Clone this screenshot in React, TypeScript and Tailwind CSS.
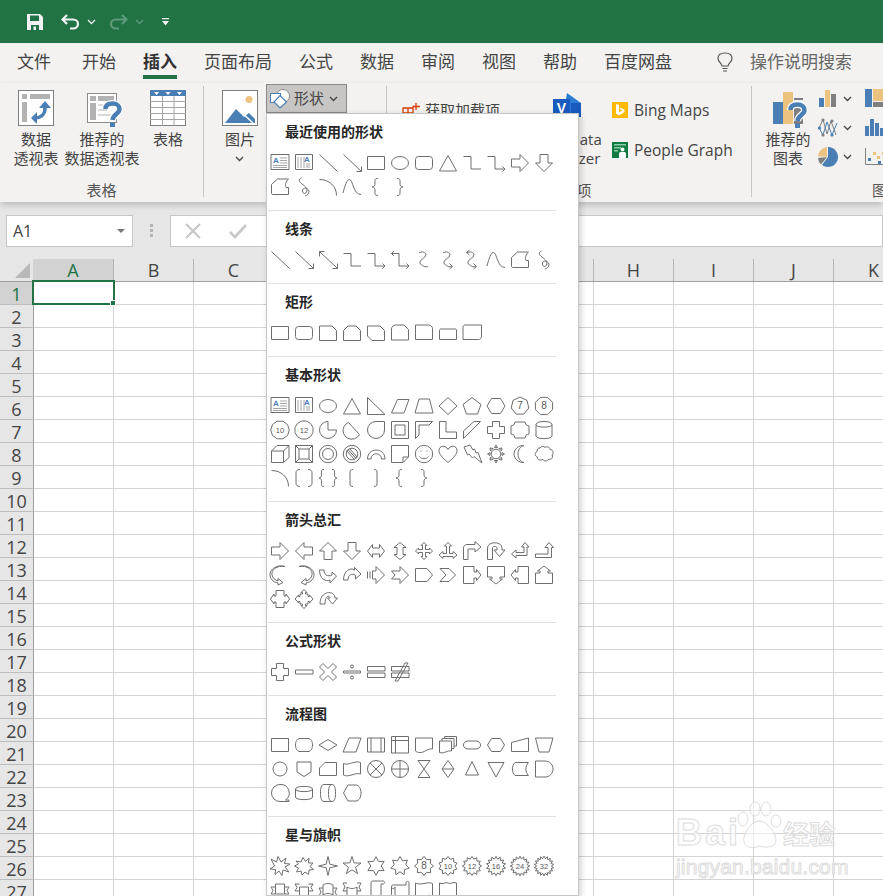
import type { ReactNode } from 'react';

const poly = (n: number, r: number, rot = -90, cx = 11, cy = 12) => {
  let d = '';
  for (let i = 0; i < n; i++) {
    const a = ((rot + (360 / n) * i) * Math.PI) / 180;
    d += `${i ? 'L' : 'M'}${(cx + r * Math.cos(a)).toFixed(1)} ${(cy + r * Math.sin(a)).toFixed(1)}`;
  }
  return d + 'z';
};

const star = (n: number, R: number, r: number, cx = 11, cy = 12) => {
  let d = '';
  for (let i = 0; i < n * 2; i++) {
    const a = ((-90 + (180 / n) * i) * Math.PI) / 180;
    const q = i % 2 ? r : R;
    d += `${i ? 'L' : 'M'}${(cx + q * Math.cos(a)).toFixed(1)} ${(cy + q * Math.sin(a)).toFixed(1)}`;
  }
  return d + 'z';
};

const circle = (r: number, cx = 11, cy = 12) =>
  `M${cx - r} ${cy}a${r} ${r} 0 1 0 ${r * 2} 0a${r} ${r} 0 1 0 ${-r * 2} 0z`;

const RECT = 'M2.5 5.5h17v13h-17z';
const ROUND = 'M5.5 5.5h11a3 3 0 0 1 3 3v7a3 3 0 0 1-3 3h-11a3 3 0 0 1-3-3v-7a3 3 0 0 1 3-3z';
const ELLIPSE = 'M2.5 12a8.5 6.5 0 1 0 17 0a8.5 6.5 0 1 0-17 0z';
const ELBOW = 'M2.5 5.5H10V18H20';
const ELBOW_ARROW = ELBOW + 'M17.5 15.5L20 18L17.5 20.5';
const CURVE_C = 'M6 4.5C11 3 14 5 12.5 8C11 11 6 12 7 15C8 18 13 19.5 15 18.5';
const WAVE = 'M2 18C4 10 6 4.5 8.5 4.5C12 4.5 12 19.5 20 19.5';
const FREEFORM = 'M8.5 4H19.5C16.5 6.5 16 10 17 12.5H19.5V19.5H4C3 19.5 2.5 19 2.5 18V9.5z';
const SCRIBBLE = 'M8.5 3C5 4 6 7 9 9C13 12 15 14 13.5 17C12 20 9 18 9.5 15C10 12 15 13 16 16C16 19 14 20.5 12 21';
const ARC = 'M2.5 4.5C12 4.5 19.5 11 19.5 20.5';
const BRACE_L = 'M13 3.5C9.5 3.5 10 5 10 8C10 10.5 9.5 12 7 12C9.5 12 10 13.5 10 16C10 19 9.5 20.5 13 20.5';
const BRACE_R = 'M8 3.5C11.5 3.5 11 5 11 8C11 10.5 11.5 12 14 12C11.5 12 11 13.5 11 16C11 19 11.5 20.5 8 20.5';
const LINE = 'M2.5 3.5L20.5 20.5';
const ARROW_LINE = LINE + 'M20.5 15.5V20.5H15.5';
const ARROW_DBL = ARROW_LINE + 'M2.5 8.5V3.5H7.5';

const PATHS: Record<string, string> = {
  textH: 'M2 3.5h18v15h-18z',
  textV: 'M2.5 3.5h17v15h-17z',
  line: LINE,
  arrow: ARROW_LINE,
  dbl: ARROW_DBL,
  rect: RECT,
  ellipse: ELLIPSE,
  round: ROUND,
  tri: 'M11 4.5L19.5 20H2.5z',
  elbow: ELBOW,
  elbowA: ELBOW_ARROW,
  elbowD: ELBOW_ARROW + 'M5 3L2.5 5.5L5 8',
  curveC: CURVE_C,
  curveA: CURVE_C + 'M12.5 21L15.5 18.5L12.5 15.5',
  curveD: CURVE_C + 'M12.5 21L15.5 18.5L12.5 15.5M8.5 2L5.5 4.5L8.5 7',
  wave: WAVE,
  free: FREEFORM,
  scrib: SCRIBBLE,
  arc: ARC,
  braceL: BRACE_L,
  braceR: BRACE_R,
  r1: 'M2.5 5H15L19.5 9.5V19.5H2.5z',
  r2: 'M7 5H15L19.5 9.5V19.5H2.5V9.5z',
  r3: 'M2.5 5H15L19.5 9.5V19.5H7L2.5 15z',
  r4: 'M6.5 4H15L19.5 8.5V19H2.5V8C2.5 6 4.5 4 6.5 4z',
  r5: 'M2.5 4H15.5C18 4 19.5 5.5 19.5 8V18.5H2.5z',
  r7: 'M4 8H18.5C19 8 19.5 8.5 19.5 9V18.5H2.5V9.5C2.5 8.5 3 8 4 8z',
  r8: 'M4 4H20.5V15C20.5 17 19.5 18.5 17.5 18.5H2V6C2 5 3 4 4 4z',
  rTri: 'M2.5 3.5L20 20.5H2.5z',
  para: 'M2.5 19L8.5 5.5H20L15 19z',
  trap: 'M6 5L2 19H20L16.5 5z',
  diamond: 'M11 3.5L20 12L11 20.5L2 12z',
  pent: 'M11 3.5L20 10.5L16.5 20H5.5L2 10.5z',
  hex: 'M6.5 4.5H15.5L20 12L15.5 19.5H6.5L2 12z',
  n7: poly(7, 9),
  n8: poly(8, 9.3, 22.5),
  n10: poly(10, 9.3, 0),
  n12: poly(12, 9.3, 15),
  pie: 'M11 3.5A8.5 8.5 0 1 0 19.5 12H11z',
  chord: 'M7.5 4.5L18.5 16.5A8.7 8.7 0 0 1 3 8.5A8 8 0 0 1 7.5 4.5z',
  drop: 'M19.5 3.5V12A8.5 8.5 0 1 1 11 3.5z',
  frame: 'M2.5 3.5h17v17h-17zM6 7h10v10H6z',
  half: 'M2.5 20.5V3.5H19.5L16 7H6V17z',
  ell: 'M2.5 3.5H9V14H19.5V20.5H2.5z',
  stripe: 'M2.5 13L13 3.5H19.5L2.5 20.5z',
  cross: 'M7.5 3.5H14.5V8.5H19.5V15.5H14.5V20.5H7.5V15.5H2.5V8.5H7.5z',
  plaque: 'M6 4H16Q16 7.5 20 8V16Q16 16.5 16 20H6Q6 16.5 2 16V8Q6 7.5 6 4z',
  can: 'M3 6.5C3 2.5 19 2.5 19 6.5V18C19 21.5 3 21.5 3 18zM3 6.5C3 10 19 10 19 6.5',
  cube: 'M2.5 9L8 3.5H20V15.5L14.5 20.5H2.5zM2.5 9H14.5V20.5M14.5 9L20 3.5',
  bevel: 'M2.5 3.5h17v17h-17zM6 7h10v10H6zM2.5 3.5L6 7M19.5 3.5L16 7M2.5 20.5L6 17M19.5 20.5L16 17',
  donut: circle(8.7) + circle(5.5),
  noSym: circle(8.7) + circle(5.8) + 'M7 7.5L15 16.5M5.5 8.5L13.5 17.5M8.5 6.5L16.5 15.5',
  bArc: 'M2.5 17C2.5 5 20 5 20 17H16.5C16.5 10 6 10 6 17z',
  fold: 'M2.5 3.5H19.5V15L14 20.5H2.5zM19.5 15H14V20.5',
  smile: circle(8.7) + 'M7.5 9h1M13.5 9h1M6.5 14.5C8.5 17.5 13.5 17.5 15.5 14.5',
  heart: 'M11 20.5C5 15.5 2 12 2 8.5C2 3.5 8.5 2.5 11 7.5C13.5 2.5 20 3.5 20 8.5C20 12 17 15.5 11 20.5z',
  bolt: 'M3 5L9 3L12 8L13.5 7L15 11L17 10.5L21 21L13 14.5L11.5 16L8 12L6.5 13z',
  sun:
    circle(4.8) +
    'M11 3L9.5 5.5H12.5zM11 21L9.5 18.5H12.5zM2.5 12L5 10.5V13.5zM19.5 12L17 10.5V13.5zM5 6L8 6.5L5.5 9zM17 6L14 6.5L16.5 9zM5 18L8 17.5L5.5 15zM17 18L14 17.5L16.5 15z',
  moon: 'M15 3.5C7 5.5 7 18.5 15 20.5C10 21 5 17 5 12C5 7 10 3 15 3.5z',
  cloud: 'M7 6C8 4 11 4 12 5.5C14 4 17 5 17 7.5C20 7.5 21 11 19 13C20.5 16 18 18 16 17C14.5 19.5 11 19.5 10 17.5C7 19 4 17.5 4.5 15C1.5 14.5 1.5 10.5 4 9.5C3.5 7.5 5.5 5.5 7 6z',
  bPair: 'M7 3.5C4 3.5 3 5 3 7V17C3 19 4 20.5 7 20.5M15 3.5C18 3.5 19 5 19 7V17C19 19 18 20.5 15 20.5',
  brPair: 'M7 3.5C4 3.5 4.5 5 4.5 8C4.5 10.5 4 12 2 12C4 12 4.5 13.5 4.5 16C4.5 19 4 20.5 7 20.5M15 3.5C18 3.5 17.5 5 17.5 8C17.5 10.5 18 12 20 12C18 12 17.5 13.5 17.5 16C17.5 19 18 20.5 15 20.5',
  bL: 'M12 3.5C9.5 3.5 9 4.5 9 6V18C9 19.5 9.5 20.5 12 20.5',
  bR: 'M9 3.5C11.5 3.5 12 4.5 12 6V18C12 19.5 11.5 20.5 9 20.5',
  aR: 'M2.5 8H11V3.5L19.5 12L11 20.5V16H2.5z',
  aL: 'M19.5 8H11V3.5L2.5 12L11 20.5V16H19.5z',
  aU: 'M7 20.5V12H2.5L11 3.5L19.5 12H15V20.5z',
  aD: 'M7 3.5V12H2.5L11 20.5L19.5 12H15V3.5z',
  aLR: 'M2.5 12L7.5 5.5V9H14.5V5.5L19.5 12L14.5 18.5V15H7.5V18.5z',
  aUD: 'M11 3.5L17 8.5H14V15.5H17L11 20.5L5 15.5H8V8.5H5z',
  aQ: 'M11 3.5L14 6.5H12.5V10.5H16.5V9L19.5 12L16.5 15V13.5H12.5V17.5H14L11 20.5L8 17.5H9.5V13.5H5.5V15L2.5 12L5.5 9V10.5H9.5V6.5H8z',
  aLRU: 'M11 3.5L14.5 7H12.5V14.5H16V12.5L20 16L16 19.5V17.5H6V19.5L2 16L6 12.5V14.5H9.5V7H7.5z',
  aBent: 'M2.5 20.5V9C2.5 7 4 5.5 6 5.5H14V2.5L20 8L14 13V10H7V20.5z',
  aU2: 'M2.5 20.5V9C2.5 2 17 2 17 9V11H20L14.5 17.5L9 11H12V9C12 7 7.5 7 7.5 9V20.5z',
  aLU: 'M16 3.5L20 8H18V16.5H7V19L2.5 15L7 11V13.5H15V8H12.5z',
  aBU: 'M16 3.5L20.5 8.5H18.5V18.5H2.5V15H15V8.5H12z',
  cR: 'M16 3.5C8 2 2 7 3 12C3.5 15 6 17 9 18V15.5L14 19.5L9 22V20C4 19 0.5 15.5 1 11C1.5 6 8 1 16 3.5z',
  cL: 'M6 3.5C14 2 20 7 19 12C18.5 15 16 17 13 18V15.5L8 19.5L13 22V20C18 19 21.5 15.5 21 11C20.5 6 14 1 6 3.5z',
  cD: 'M2.5 7C2.5 16 9 19 13 17V20L19.5 13L15 9V12C11 14 7 12 7 7z',
  cU: 'M2.5 17C2.5 8 9 4 13.5 7V4.5L20 11L14.5 16V12.5C11 9.5 7 12 7 17z',
  aStr: 'M2.5 8.5V15.5M5 8.5V15.5M7.5 8H11V3.5L19.5 12L11 20.5V16H7.5z',
  aNot: 'M2.5 8H11V3.5L19.5 12L11 20.5V16H2.5L6 12z',
  home: 'M2.5 5.5H14L19.5 12L14 18.5H2.5z',
  chev: 'M3 5.5H12L18.5 12L12 18.5H3L9 12z',
  cbR: 'M2.5 3.5H13V9H15.5V6.5L20 12L15.5 17.5V15H13V20.5H2.5z',
  cbD: 'M2.5 3.5H19.5V14H15V16H17.5L11 21L4.5 16H7V14H2.5z',
  cbL: 'M19.5 3.5H9V9H6.5V6.5L2 12L6.5 17.5V15H9V20.5H19.5z',
  cbU: 'M2.5 20.5V10H7V8H4.5L11 3L17.5 8H15V10H19.5V20.5z',
  cbLR: 'M7 3.5H15V9H17V7L20.5 12L17 17V15H15V20.5H7V15H5V17L1.5 12L5 7V9H7z',
  cbQ: 'M11 2.5L14 5.5H12.5V7H15V9.5H16.5V8L20 12L16.5 16V14.5H15V17H12.5V18.5H14L11 21.5L8 18.5H9.5V17H7V14.5H5.5V16L2 12L5.5 8V9.5H7V7H9.5V5.5H8z',
  aCirc: 'M3 17C3 3 18 3 18 11H20.5L15.5 17L10.5 11H13C13 8 8 8 8 17z',
  plus: 'M7.5 3.5H14.5V8.5H19.5V15.5H14.5V20.5H7.5V15.5H2.5V8.5H7.5z',
  minus: 'M2.5 10H20V14H2.5z',
  times: 'M6 3.5L11 8.5L16 3.5L19.5 7L14.5 12L19.5 17L16 20.5L11 15.5L6 20.5L2.5 17L7.5 12L2.5 7z',
  div: 'M2.5 11H19.5V13H2.5z' + circle(1.5, 11, 6.5) + circle(1.5, 11, 17.5),
  eq: 'M2.5 6.5H20V11H2.5zM2.5 13H20V17.5H2.5z',
  neq: 'M2.5 6.5H20V11H2.5zM2.5 13H20V17.5H2.5zM6 21L16 3H19L9 21z',
  fRound: 'M7 5.5H15C18 5.5 19.5 8.5 19.5 12C19.5 15.5 18 18.5 15 18.5H7C4 18.5 2.5 15.5 2.5 12C2.5 8.5 4 5.5 7 5.5z',
  fDia: 'M11 6.5L20 12L11 17.5L2 12z',
  fPara: 'M2 19L8 5H20L15 19z',
  fPre: 'M2.5 5H19.5V19H2.5zM6 5V19M16 5V19',
  fInt: 'M2.5 3.5H19.5V20H2.5zM2.5 7.5H19.5M6.5 3.5V20',
  fDoc: 'M2.5 5H19.5V16C15 15 11 20 7 19.5C5 19.5 3.5 19 2.5 18z',
  fMulti: 'M2.5 8H14.5V18C10 17 8 21 2.5 19.5zM5 8V5.5H17V15.5H14.5M7.5 5.5V3.5H19.5V13H17',
  fTerm: 'M7 8H15C18 8 19.5 10 19.5 12C19.5 14 18 16 15 16H7C4 16 2.5 14 2.5 12C2.5 10 4 8 7 8z',
  fPrep: 'M6.5 5.5H15.5L19.5 12L15.5 18.5H6.5L2.5 12z',
  fMan: 'M2.5 9.5L19.5 5V18.5H2.5z',
  fOp: 'M2.5 5H20L16 19H6z',
  fConn: circle(7),
  fOff: 'M4 5H18V15L11 19.5L4 15z',
  fCard: 'M8 5.5H19.5V18.5H2.5V11z',
  fTape: 'M2.5 6.5C7 9 14 3 19.5 5.5V17C14 15 8 21 2.5 18z',
  fSum: circle(8.5) + 'M5 6L17 18M17 6L5 18',
  fOr: circle(8.5) + 'M2.5 12H19.5M11 3.5V20.5',
  fCol: 'M5 3.5H17L5 20.5H17z',
  fSort: 'M11 3.5L17 12L11 20.5L5 12zM5 12H17',
  fExt: 'M11 4.5L17.5 18H4.5z',
  fMer: 'M3 5.5H19L11 20z',
  fStored: 'M6 5.5H19.5C16 9 16 15 19.5 18.5H6C2.5 15 2.5 9 6 5.5z',
  fDelay: 'M2.5 4H12C17 4 20 8 20 12C20 16 17 20 12 20H2.5z',
  fSeq: 'M11 3.5A8.5 8.5 0 1 0 11 20.5H20V19H16.5A8.5 8.5 0 0 0 11 3.5z',
  fDisk: 'M2.5 8C2.5 4.5 19.5 4.5 19.5 8V16C19.5 19.5 2.5 19.5 2.5 16zM2.5 8C2.5 11.5 19.5 11.5 19.5 8',
  fDir: 'M7 3.5H15C18 3.5 18.5 8 18.5 12C18.5 16 18 20.5 15 20.5H7C4 20.5 3.5 16 3.5 12C3.5 8 4 3.5 7 3.5zM15 3.5C12 3.5 11.5 8 11.5 12C11.5 16 12 20.5 15 20.5',
  fDisp: 'M7 4H15C18 4 20 8 20 12C20 16 18 20 15 20H7L2.5 12z',
  ex1: 'M2 5L7.5 8L9 2.5L12 8L17 4L15.5 9.5L21 10L16 13L20 18L14 16L13 21.5L10 17L6 20.5L6.5 15.5L1 15L5.5 12z',
  ex2: 'M3 7L8 8L10 3.5L12.5 7.5L16 4L15.5 9L20 9L17 12.5L20.5 15.5L16 16L15.5 20.5L12 18L9 21L8 17L3.5 18L5.5 14L1.5 12L5.5 10z',
  s4: star(4, 9.5, 2.5),
  s5: star(5, 9.5, 3.8),
  s6: star(6, 9.3, 5.2),
  s7: star(7, 9.5, 5.8),
  s8: star(8, 9.5, 6.8),
  s10: star(10, 9.5, 7),
  s12: star(12, 9.6, 7),
  s16: star(14, 9.7, 7),
  s24: star(16, 9.8, 7.2),
  s32: star(18, 9.9, 7.4),
  rib1: 'M6.5 6H15.5V16H6.5zM6.5 9H2L4 12.5L2 16H6.5M15.5 9H20L18 12.5L20 16H15.5',
  rib2: 'M6.5 9H15.5V19H6.5zM6.5 6H2L4 9.5L2 13H6.5M15.5 6H20L18 9.5L20 13H15.5',
  rib3: 'M6 7C9 5 13 5 16 7V17C13 15 9 15 6 17zM6 10H2L4 14L2 18H6M16 10H20L18 14L20 18H16',
  rib4: 'M6 9C9 11 13 11 16 9V19C13 21 9 21 6 19zM6 5H2L4 9L2 13H6M16 5H20L18 9L20 13H16',
  sV: 'M6 5C6 3.5 7 3 8 3H18C20 3 20 6 18 6H16V20C16 21.5 14 21.5 12 21.5H4C2.5 21.5 2.5 18.5 4 18.5H6z',
  sH: 'M4.5 7H17V4.5C17 3 20 3 20 4.5V17C20 18.5 18 19 17 19H5C2.5 19 2.5 17 2.5 15V9C2.5 7.5 3 7 4.5 7zM2.5 9C2.5 11 6 11 6 9V19',
  wav: 'M2.5 5C8 8 14 3 19.5 5.5V18C14 15.5 8 21 2.5 18z',
  wav2: 'M2.5 5C6 7 9 3.5 11 5C13 6.5 16 3.5 19.5 5V18C16 16.5 13 19.5 11 18C9 16.5 6 20 2.5 18z',
};

const NUMS: Record<string, string> = {
  n7: '7',
  n8: '8',
  n10: '10',
  n12: '12',
  s8: '8',
  s10: '10',
  s12: '12',
  s16: '16',
  s24: '24',
  s32: '32',
};

function Shape({ name }: { name: string }) {
  return (
    <svg width="24" height="24" viewBox="0 0 24 24" fill="none" className="block shrink-0">
      <path d={PATHS[name]} stroke="#6e6e6e" strokeWidth="1" />
      {name === 'textH' && (
        <>
          <path d="M11 7h7M11 9.5h7M11 12h7M4 14.5h14M4 16.5h14" stroke="#a6a6a6" />
          <text x="4" y="12" fontSize="8" fontWeight="700" fill="#4a7ebb" fontFamily="'Liberation Sans'">A</text>
        </>
      )}
      {name === 'textV' && (
        <>
          <path d="M5 6v11M8 6v11M11 6v11M14 12v5M16 12v5" stroke="#a6a6a6" />
          <text x="11" y="11" fontSize="8" fontWeight="700" fill="#4a7ebb" fontFamily="'Liberation Sans'">A</text>
        </>
      )}
      {NUMS[name] && (
        <text x="11" y="15" textAnchor="middle" fontSize={NUMS[name].length > 1 ? 7.5 : 10} fill="#555" fontFamily="'Liberation Sans'">
          {NUMS[name]}
        </text>
      )}
    </svg>
  );
}

const SECTIONS: { title: string; rows: string[][] }[] = [
  {
    title: '最近使用的形状',
    rows: [
      ['textH', 'textV', 'line', 'arrow', 'rect', 'ellipse', 'round', 'tri', 'elbow', 'elbowA', 'aR', 'aD'],
      ['free', 'scrib', 'arc', 'wave', 'braceL', 'braceR'],
    ],
  },
  {
    title: '线条',
    rows: [['line', 'arrow', 'dbl', 'elbow', 'elbowA', 'elbowD', 'curveC', 'curveA', 'curveD', 'wave', 'free', 'scrib']],
  },
  { title: '矩形', rows: [['rect', 'round', 'r1', 'r2', 'r3', 'r4', 'r5', 'r7', 'r8']] },
  {
    title: '基本形状',
    rows: [
      ['textH', 'textV', 'ellipse', 'tri', 'rTri', 'para', 'trap', 'diamond', 'pent', 'hex', 'n7', 'n8'],
      ['n10', 'n12', 'pie', 'chord', 'drop', 'frame', 'half', 'ell', 'stripe', 'cross', 'plaque', 'can'],
      ['cube', 'bevel', 'donut', 'noSym', 'bArc', 'fold', 'smile', 'heart', 'bolt', 'sun', 'moon', 'cloud'],
      ['arc', 'bPair', 'brPair', 'bL', 'bR', 'braceL', 'braceR'],
    ],
  },
  {
    title: '箭头总汇',
    rows: [
      ['aR', 'aL', 'aU', 'aD', 'aLR', 'aUD', 'aQ', 'aLRU', 'aBent', 'aU2', 'aLU', 'aBU'],
      ['cR', 'cL', 'cD', 'cU', 'aStr', 'aNot', 'home', 'chev', 'cbR', 'cbD', 'cbL', 'cbU'],
      ['cbLR', 'cbQ', 'aCirc'],
    ],
  },
  { title: '公式形状', rows: [['plus', 'minus', 'times', 'div', 'eq', 'neq']] },
  {
    title: '流程图',
    rows: [
      ['rect', 'fRound', 'fDia', 'fPara', 'fPre', 'fInt', 'fDoc', 'fMulti', 'fTerm', 'fPrep', 'fMan', 'fOp'],
      ['fConn', 'fOff', 'fCard', 'fTape', 'fSum', 'fOr', 'fCol', 'fSort', 'fExt', 'fMer', 'fStored', 'fDelay'],
      ['fSeq', 'fDisk', 'fDir', 'fDisp'],
    ],
  },
  {
    title: '星与旗帜',
    rows: [
      ['ex1', 'ex2', 's4', 's5', 's6', 's7', 's8', 's10', 's12', 's16', 's24', 's32'],
      ['rib1', 'rib2', 'rib3', 'rib4', 'sV', 'sH', 'wav', 'wav2'],
    ],
  },
];

function ShapesMenu() {
  return (
    <div className="absolute left-[266px] top-[113px] bottom-0 w-[313px] overflow-hidden border border-[#c6c6c6] bg-white shadow-[2px_2px_6px_rgba(0,0,0,0.18)] z-20">
      {SECTIONS.map((section, index) => (
        <div key={section.title} className={index ? 'border-t border-[#e1e1e1] ml-px mr-[22px]' : 'ml-px mr-[22px]'}>
          <div className="flex h-[37px] items-center pb-[2px] pl-[17px] text-[14px] font-bold text-[#262626]">
            {section.title}
          </div>
          <div className="pl-px pb-[11px]">
            {section.rows.map((row, rowIndex) => (
              <div key={rowIndex} className="flex h-[24px]">
                {row.map((name, i) => (
                  <Shape key={i} name={name} />
                ))}
              </div>
            ))}
          </div>
        </div>
      ))}
    </div>
  );
}

function Chevron({ className = 'text-[#444]' }: { className?: string }) {
  return (
    <svg width="9" height="6" viewBox="0 0 9 6" fill="none" className={className}>
      <path d="M1 1l3.5 3.5L8 1" stroke="currentColor" strokeWidth="1.3" />
    </svg>
  );
}

function TitleBar() {
  return (
    <div className="flex h-[43px] items-center bg-[#217346] pl-[27px]">
      <svg width="16" height="16" viewBox="0 0 16 16" className="block">
        <path d="M0 0H13L16 3V16H0z" fill="#f2f2f2" />
        <path d="M3 1.5H12V7H3z" fill="#217346" />
        <path d="M4 11H12V16H4z" fill="#217346" />
        <path d="M6.5 12.5H9V16H6.5z" fill="#f2f2f2" />
      </svg>
      <svg width="19" height="16" viewBox="0 0 19 16" fill="none" className="ml-[18px]">
        <path d="M6 1L1.5 5.5L6 10M2 5.5H12C15 5.5 17 7.5 17 10C17 12.5 15 14.5 12 14.5H9" stroke="#f2f2f2" strokeWidth="2.2" />
      </svg>
      <Chevron className="ml-[7px] text-[#f2f2f2]" />
      <svg width="19" height="16" viewBox="0 0 19 16" fill="none" className="ml-[13px]">
        <path d="M13 1L17.5 5.5L13 10M17 5.5H7C4 5.5 2 7.5 2 10C2 12.5 4 14.5 7 14.5H10" stroke="#5c9a7b" strokeWidth="2.2" />
      </svg>
      <Chevron className="ml-[7px] text-[#5c9a7b]" />
      <svg width="7" height="8" viewBox="0 0 7 8" className="ml-[18px]">
        <path d="M0 0H7V1.2H0zM0 3H7L3.5 7.5z" fill="#f2f2f2" />
      </svg>
    </div>
  );
}

const TABS = ['文件', '开始', '插入', '页面布局', '公式', '数据', '审阅', '视图', '帮助', '百度网盘'];

function TabBar() {
  return (
    <div className="flex h-[40px] items-start bg-[#f3f2f1] pl-[17px] text-[#444]">
      {TABS.map((tab, i) => (
        <div
          key={tab}
          className={`relative mr-[27px] h-[36px] text-[17px] leading-[36px] ${i === 0 ? 'pr-[4px]' : ''} ${tab === '插入' ? 'font-bold text-[#333] border-b-[4px] border-[#217346]' : ''}`}
        >
          {tab}
        </div>
      ))}
      <svg width="16" height="21" viewBox="0 0 16 21" fill="none" className="mt-[9px] ml-[18px]">
        <path d="M5 14C5 11 1 10 1 6.5C1 3 4 1 8 1C12 1 15 3 15 6.5C15 10 11 11 11 14zM5.5 16.5H10.5M6 19H10" stroke="#555" strokeWidth="1.2" />
      </svg>
      <div className="ml-[17px] text-[17px] leading-[36px] text-[#666]">操作说明搜索</div>
    </div>
  );
}

function PivotIcon() {
  return (
    <svg width="36" height="36" viewBox="0 0 36 36">
      <rect x="0.5" y="0.5" width="35" height="35" fill="#fff" stroke="#7f7f7f" />
      <path d="M4 4H9V9H4zM12 4H32V9H12zM4 12H9V32H4z" fill="#b2b2b2" />
      <path d="M17 28C22 28 27 25 27 18" fill="none" stroke="#4a7fb5" strokeWidth="3.5" />
      <path d="M21 18H33L27 11zM19 22V34L13 28z" fill="#4a7fb5" />
    </svg>
  );
}

function HelpMark({ x, y }: { x: number; y: number }) {
  return (
    <g transform={`translate(${x} ${y})`}>
      <path d="M2.5 8C2.5 4 5.5 2.5 9.5 2.5C14 2.5 16.5 5 16.5 8C16.5 13 10 13 9.5 19" fill="none" stroke="#fff" strokeWidth="7" />
      <path d="M2.5 8C2.5 4 5.5 2.5 9.5 2.5C14 2.5 16.5 5 16.5 8C16.5 13 10 13 9.5 19" fill="none" stroke="#4a7fb5" strokeWidth="4.5" />
      <rect x="7" y="21.5" width="5" height="4.5" fill="#4a7fb5" />
    </g>
  );
}

function RecPivotIcon() {
  return (
    <svg width="36" height="36" viewBox="0 0 36 36" className="overflow-visible">
      <rect x="3.5" y="3.5" width="29" height="29" fill="#fff" stroke="#8c8c8c" />
      <path d="M6 6H12V11H6zM14 6H30V11H14zM6 13H12V30H6z" fill="#b2b2b2" />
      <path d="M14 14H23V16H14zM14 19H23V21H14zM14 24H30V26H14z" fill="#d9d9d9" />
      <HelpMark x={19} y={11} />
    </svg>
  );
}

function TableIcon() {
  return (
    <svg width="36" height="36" viewBox="0 0 36 36">
      <rect x="0.5" y="0.5" width="35" height="35" fill="#fff" stroke="#7f7f7f" />
      <rect width="36" height="6" fill="#4a7fb5" />
      <path d="M4 2H9L6.5 5zM15.5 2H20.5L18 5zM27 2H32L29.5 5z" fill="#fff" />
      <path d="M12.5 6V36M24 6V36M0 11.5H36M0 17.5H36M0 23.5H36M0 29.5H36" stroke="#a6a6a6" />
    </svg>
  );
}

function PictureIcon() {
  return (
    <svg width="36" height="36" viewBox="0 0 36 36">
      <rect x="0.5" y="0.5" width="35" height="35" fill="#fff" stroke="#7f7f7f" />
      <circle cx="27" cy="9.5" r="3.5" fill="#eec27f" />
      <path d="M3 33L14 19L22 27L27 23L33 29V33z" fill="#4a7fb5" />
      <path d="M17 20L31 33" stroke="#fff" strokeWidth="1.5" />
    </svg>
  );
}

function ShapesIcon() {
  return (
    <svg width="21" height="20" viewBox="0 0 21 20" fill="none">
      <circle cx="13" cy="7" r="6.5" fill="#fff" stroke="#8c8c8c" />
      <rect x="0.5" y="4.5" width="10" height="9" fill="#fff" stroke="#4a7fb5" />
      <path d="M10 6.5L16.5 13L10 19L4 13z" fill="#fff" stroke="#4a7fb5" strokeWidth="1.2" />
    </svg>
  );
}

function VisioIcon() {
  return (
    <svg width="28" height="30" viewBox="0 0 28 30">
      <path d="M14 0L28 10V24H10z" fill="#2b7cd3" />
      <path d="M18 10L28 10V24H18z" fill="#185abd" />
      <rect y="6" width="17" height="17" fill="#185abd" />
      <text x="8.5" y="20" textAnchor="middle" fontSize="14" fontWeight="700" fill="#fff" fontFamily="'Liberation Sans'">V</text>
    </svg>
  );
}

function BingIcon() {
  return (
    <svg width="16" height="16" viewBox="0 0 16 16" className="shrink-0">
      <rect width="16" height="16" fill="#ffb900" />
      <path d="M4 2L7 3V10.5L10.5 8.5L8.5 7.5L7.5 5.5L12.5 7.5V10L7 13.5L4 11.5z" fill="#fff" />
    </svg>
  );
}

function PeopleIcon() {
  return (
    <svg width="16" height="16" viewBox="0 0 16 16" className="shrink-0">
      <rect width="16" height="16" fill="#107c41" />
      <path d="M2 2H14V3.5H2zM2 5H9V6.5H2zM2 8H6V9.5H2z" fill="#8fcbaa" />
      <circle cx="10.5" cy="7.5" r="2" fill="#fff" />
      <path d="M7 16V12C7 10.5 8 10 9 10H12C13 10 14 10.5 14 12V16z" fill="#fff" />
    </svg>
  );
}

function RecChartIcon() {
  return (
    <svg width="36" height="36" viewBox="0 0 36 36" className="overflow-visible">
      <rect x="3" y="12" width="10" height="22" fill="#4a7fb5" />
      <rect x="13" y="2" width="10" height="32" fill="#ecc27f" />
      <rect x="24" y="8" width="9" height="2" fill="#7f7f7f" />
      <rect x="24" y="16" width="9" height="18" fill="#7f7f7f" />
      <HelpMark x={18} y={12} />
    </svg>
  );
}

function BarsIcon() {
  return (
    <svg width="20" height="20" viewBox="0 0 20 20">
      <rect x="1" y="9" width="5" height="9" fill="#4a7fb5" />
      <rect x="7" y="1" width="5" height="17" fill="#ecc27f" />
      <rect x="13" y="5" width="5" height="13" fill="#7f7f7f" />
    </svg>
  );
}

function LinesIcon() {
  return (
    <svg width="20" height="20" viewBox="0 0 20 20" fill="none">
      <path d="M1 10L5 1.5L9 16L13 3L18 17" stroke="#7f7f7f" />
      <path d="M1 10L5 17L9 4L14 17L19 5" stroke="#4a7fb5" />
      <circle cx="5" cy="2" r="1.6" fill="#7f7f7f" />
      <circle cx="14" cy="3" r="1.6" fill="#7f7f7f" />
      <circle cx="1.5" cy="10" r="1.6" fill="#4a7fb5" />
      <circle cx="5" cy="17" r="1.6" fill="#7f7f7f" />
      <circle cx="14" cy="17" r="1.6" fill="#4a7fb5" />
    </svg>
  );
}

function PieIcon() {
  return (
    <svg width="20" height="20" viewBox="0 0 20 20">
      <path d="M10 0A10 10 0 1 1 4 18L10 10z" fill="#4a7fb5" />
      <path d="M9 10L3 17.5A10 10 0 0 1 0 11z" fill="#7f7f7f" />
      <path d="M9 0V9.5H0A10 10 0 0 1 9 0z" fill="#ecc27f" />
    </svg>
  );
}

function TreemapIcon() {
  return (
    <svg width="20" height="20" viewBox="0 0 20 20">
      <rect x="0" y="0" width="7" height="18" fill="#4a7fb5" />
      <rect x="8" y="0" width="12" height="12" fill="#ecc27f" />
      <rect x="8" y="13" width="12" height="5" fill="#7f7f7f" />
    </svg>
  );
}

function HistIcon() {
  return (
    <svg width="20" height="20" viewBox="0 0 20 20" fill="#4a7fb5">
      <rect x="0" y="8" width="4" height="10" />
      <rect x="5" y="1" width="4" height="17" />
      <rect x="10" y="5" width="4" height="13" />
      <rect x="15" y="10" width="5" height="8" />
    </svg>
  );
}

function ScatterIcon() {
  return (
    <svg width="20" height="20" viewBox="0 0 20 20" fill="none">
      <path d="M0.5 1V17.5H20" stroke="#7f7f7f" />
      <path d="M3 11h3v3H3zM13 14h3v3h-3z" fill="#4a7fb5" />
      <path d="M8 5h3v3H8zM12 9h3v3h-3zM17 5h3v3h-3z" fill="#ecc27f" />
    </svg>
  );
}

function BigButton({ icon, lines, width, after }: { icon: ReactNode; lines: string[]; width: string; after?: ReactNode }) {
  return (
    <div className={`flex flex-col items-center shrink-0 ${width}`}>
      <div className="flex h-[36px] w-full items-center justify-center mt-[7px]">{icon}</div>
      <div className="mt-[4px] flex flex-col items-center">
        {lines.map((line) => (
          <div key={line} className="whitespace-nowrap text-[15px] leading-[19px] text-[#444]">
            {line}
          </div>
        ))}
        {after}
      </div>
    </div>
  );
}

function Group({ width, inner, label, children }: { width: string; inner: string; label: string; children: ReactNode }) {
  return (
    <div className={`flex h-full shrink-0 flex-col ${width}`}>
      <div className={`flex flex-1 ${inner}`}>{children}</div>
      <div className="pb-[2px] text-center text-[15px] leading-[19px] text-[#555]">{label}</div>
    </div>
  );
}

function GroupDivider() {
  return <div className="mt-[3px] h-[111px] w-px shrink-0 bg-[#c8c6c4]" />;
}

function Ribbon() {
  return (
    <div className="relative z-10 flex h-[119px] bg-[#f3f2f1] shadow-[0_3px_6px_rgba(0,0,0,0.18)] font-['Open_Sans','Noto_Sans_CJK_SC',sans-serif]">
      <Group width="w-[203px]" inner="pl-[3px]" label="表格">
        <BigButton width="w-[66px]" icon={<PivotIcon />} lines={['数据', '透视表']} />
        <BigButton width="w-[66px]" icon={<RecPivotIcon />} lines={['推荐的', '数据透视表']} />
        <BigButton width="w-[66px]" icon={<TableIcon />} lines={['表格']} />
      </Group>
      <GroupDivider />
      <Group width="w-[182px]" inner="pl-[10px]" label="插图">
        <BigButton
          width="w-[52px]"
          icon={<PictureIcon />}
          lines={['图片']}
          after={
            <div className="flex h-[19px] items-center">
              <Chevron />
            </div>
          }
        />
        <div className="shrink-0 pt-px">
          <div className="flex h-[29px] w-[81px] items-center border border-[#8a8886] bg-[#c8c6c4] pl-[3px] text-[15px] text-[#444]">
            <ShapesIcon />
            <span className="ml-[3px]">形状</span>
            <Chevron className="ml-[5px] text-[#444]" />
          </div>
        </div>
      </Group>
      <GroupDivider />
      <Group width="w-[364px]" inner="pl-[15px]" label="加载项">
        <div className="flex h-[24px] w-[132px] shrink-0 items-center gap-[4px] mt-[15px]">
          <svg width="19" height="17" viewBox="0 0 19 17" fill="none" className="shrink-0">
            <path d="M1 6H11V16H1zM6 6V16M1 11H11M14 1V8M10.5 4.5H18" stroke="#d83b01" strokeWidth="1.3" />
          </svg>
          <span className="whitespace-nowrap text-[15px] text-[#444]">获取加载项</span>
        </div>
        <BigButton width="w-[66px]" icon={<VisioIcon />} lines={['Visio Data', 'Visualizer']} />
        <div className="ml-[12px] flex flex-col gap-[16px] pt-[15px] text-[15.5px] leading-[24px] text-[#444]">
          <div className="flex items-center gap-[6px] whitespace-nowrap">
            <BingIcon />
            Bing Maps
          </div>
          <div className="flex items-center gap-[6px] whitespace-nowrap">
            <PeopleIcon />
            People Graph
          </div>
        </div>
      </Group>
      <GroupDivider />
      <Group width="w-[270px]" inner="pl-[4px]" label="图表">
        <BigButton width="w-[64px]" icon={<RecChartIcon />} lines={['推荐的', '图表']} />
        <div className="-ml-[2px] flex flex-col pt-[1px]">
          {[<BarsIcon key="b" />, <LinesIcon key="l" />, <PieIcon key="p" />].map((icon, i) => (
            <div key={i} className="flex h-[29px] items-center">
              {icon}
              <Chevron className="ml-[5px] text-[#444]" />
            </div>
          ))}
        </div>
        <div className="ml-[13px] flex flex-col pt-[1px]">
          {[<TreemapIcon key="t" />, <HistIcon key="h" />, <ScatterIcon key="s" />].map((icon, i) => (
            <div key={i} className="flex h-[29px] items-center">
              {icon}
            </div>
          ))}
        </div>
      </Group>
    </div>
  );
}

function FormulaBar() {
  return (
    <div className="flex h-[57px] items-start bg-[#e6e6e6] pt-[13px] pl-[6px] font-['Open_Sans',sans-serif]">
      <div className="flex h-[32px] w-[127px] shrink-0 items-center justify-between border border-[#c6c6c6] bg-white pl-[6px] pr-[7px] text-[16px] text-[#444]">
        A1
        <svg width="8" height="4" viewBox="0 0 8 4">
          <path d="M0 0H8L4 4z" fill="#777" />
        </svg>
      </div>
      <div className="ml-[17px] mt-[9px] flex w-[3px] shrink-0 flex-col gap-[2px]">
        <div className="h-[3px] bg-[#b4b4b4]" />
        <div className="h-[3px] bg-[#b4b4b4]" />
        <div className="h-[3px] bg-[#b4b4b4]" />
      </div>
      <div className="ml-[17px] flex h-[32px] flex-1 items-center border border-[#c6c6c6] bg-white pl-[14px]">
        <svg width="16" height="16" viewBox="0 0 16 16" fill="none">
          <path d="M1 1L15 15M15 1L1 15" stroke="#c8c8c8" strokeWidth="2.2" />
        </svg>
        <svg width="18" height="16" viewBox="0 0 18 16" fill="none" className="ml-[28px]">
          <path d="M1 9L6 14L17 2" stroke="#c8c8c8" strokeWidth="2.6" />
        </svg>
      </div>
    </div>
  );
}

const COLUMNS = ['A', 'B', 'C', 'D', 'E', 'F', 'G', 'H', 'I', 'J', 'K'];
const ROWS = Array.from({ length: 27 }, (_, i) => i + 1);

function Sheet() {
  return (
    <div className="relative font-['Open_Sans',sans-serif] text-[18px] text-[#444]">
      <div className="flex h-[22px] box-content border-b border-[#9f9f9f] bg-[#e6e6e6]">
        <div className="flex w-[33px] shrink-0 items-end justify-end pb-[3px] pr-[3px]">
          <svg width="15" height="15" viewBox="0 0 15 15">
            <path d="M15 0V15H0z" fill="#b8b8b8" />
          </svg>
        </div>
        {COLUMNS.map((col, i) => (
          <div
            key={col}
            className={`flex shrink-0 items-center justify-center border-r border-[#b4b4b4] leading-none ${i === 0 ? 'w-[81px] bg-[#d2d2d2] text-[#217346]' : 'w-[80px]'}`}
          >
            {col}
          </div>
        ))}
      </div>
      {ROWS.map((row) => (
        <div key={row} className="flex h-[23px] bg-white">
          <div
            className={`flex w-[34px] shrink-0 items-center justify-center border-r border-b border-r-[#9f9f9f] border-b-[#bdbdbd] pt-[1px] leading-none ${row === 1 ? 'bg-[#d2d2d2] text-[#217346]' : 'bg-[#e6e6e6]'}`}
          >
            {row}
          </div>
          {COLUMNS.map((col) => (
            <div key={col} className="w-[80px] shrink-0 border-r border-b border-[#d4d4d4]" />
          ))}
        </div>
      ))}
      <div className="absolute left-[32px] top-[21px] h-[25px] w-[83px] border-2 border-[#217346]">
        <div className="absolute -bottom-[3px] -right-[3px] h-[6px] w-[6px] border border-white bg-[#217346]" />
      </div>
      <Watermark />
    </div>
  );
}

function Watermark() {
  return (
    <div className="absolute left-[676px] top-[542px] z-10 w-[170px] select-none font-['Liberation_Sans',sans-serif]">
      <div className="flex h-[50px] items-end">
        <span className="text-[36px] font-bold leading-[36px] tracking-[3px] text-white/50 [-webkit-text-stroke:1px_#dcdcdc]">Bai</span>
        <svg width="48" height="50" viewBox="0 0 48 50" fill="none" className="-ml-[6px]">
          <g stroke="#dcdcdc" fill="#ffffff" fillOpacity="0.5">
            <ellipse cx="8" cy="18" rx="5" ry="7" />
            <ellipse cx="20" cy="8" rx="5" ry="7" />
            <ellipse cx="31" cy="8" rx="5" ry="7" />
            <ellipse cx="41" cy="20" rx="5" ry="6" />
            <path d="M24 20C16 20 7 34 9 41C11 48 19 47 25 45C31 47 41 47 41 39C41 32 32 20 24 20z" />
          </g>
        </svg>
        <span className="text-[26px] font-bold leading-[36px] text-white/50 [-webkit-text-stroke:1px_#dcdcdc] font-['Noto_Sans_CJK_SC']">经验</span>
      </div>
      <div className="mt-[6px] whitespace-nowrap text-[21px] leading-[20px] tracking-[0.2px] text-white/50 [-webkit-text-stroke:1px_#dcdcdc]">
        jingyan.baidu.com
      </div>
    </div>
  );
}

export default function App() {
  return (
    <div className="relative h-[896px] w-[883px] overflow-hidden bg-white font-['Noto_Sans_CJK_SC',sans-serif]">
      <TitleBar />
      <TabBar />
      <Ribbon />
      <FormulaBar />
      <Sheet />
      <ShapesMenu />
    </div>
  );
}
